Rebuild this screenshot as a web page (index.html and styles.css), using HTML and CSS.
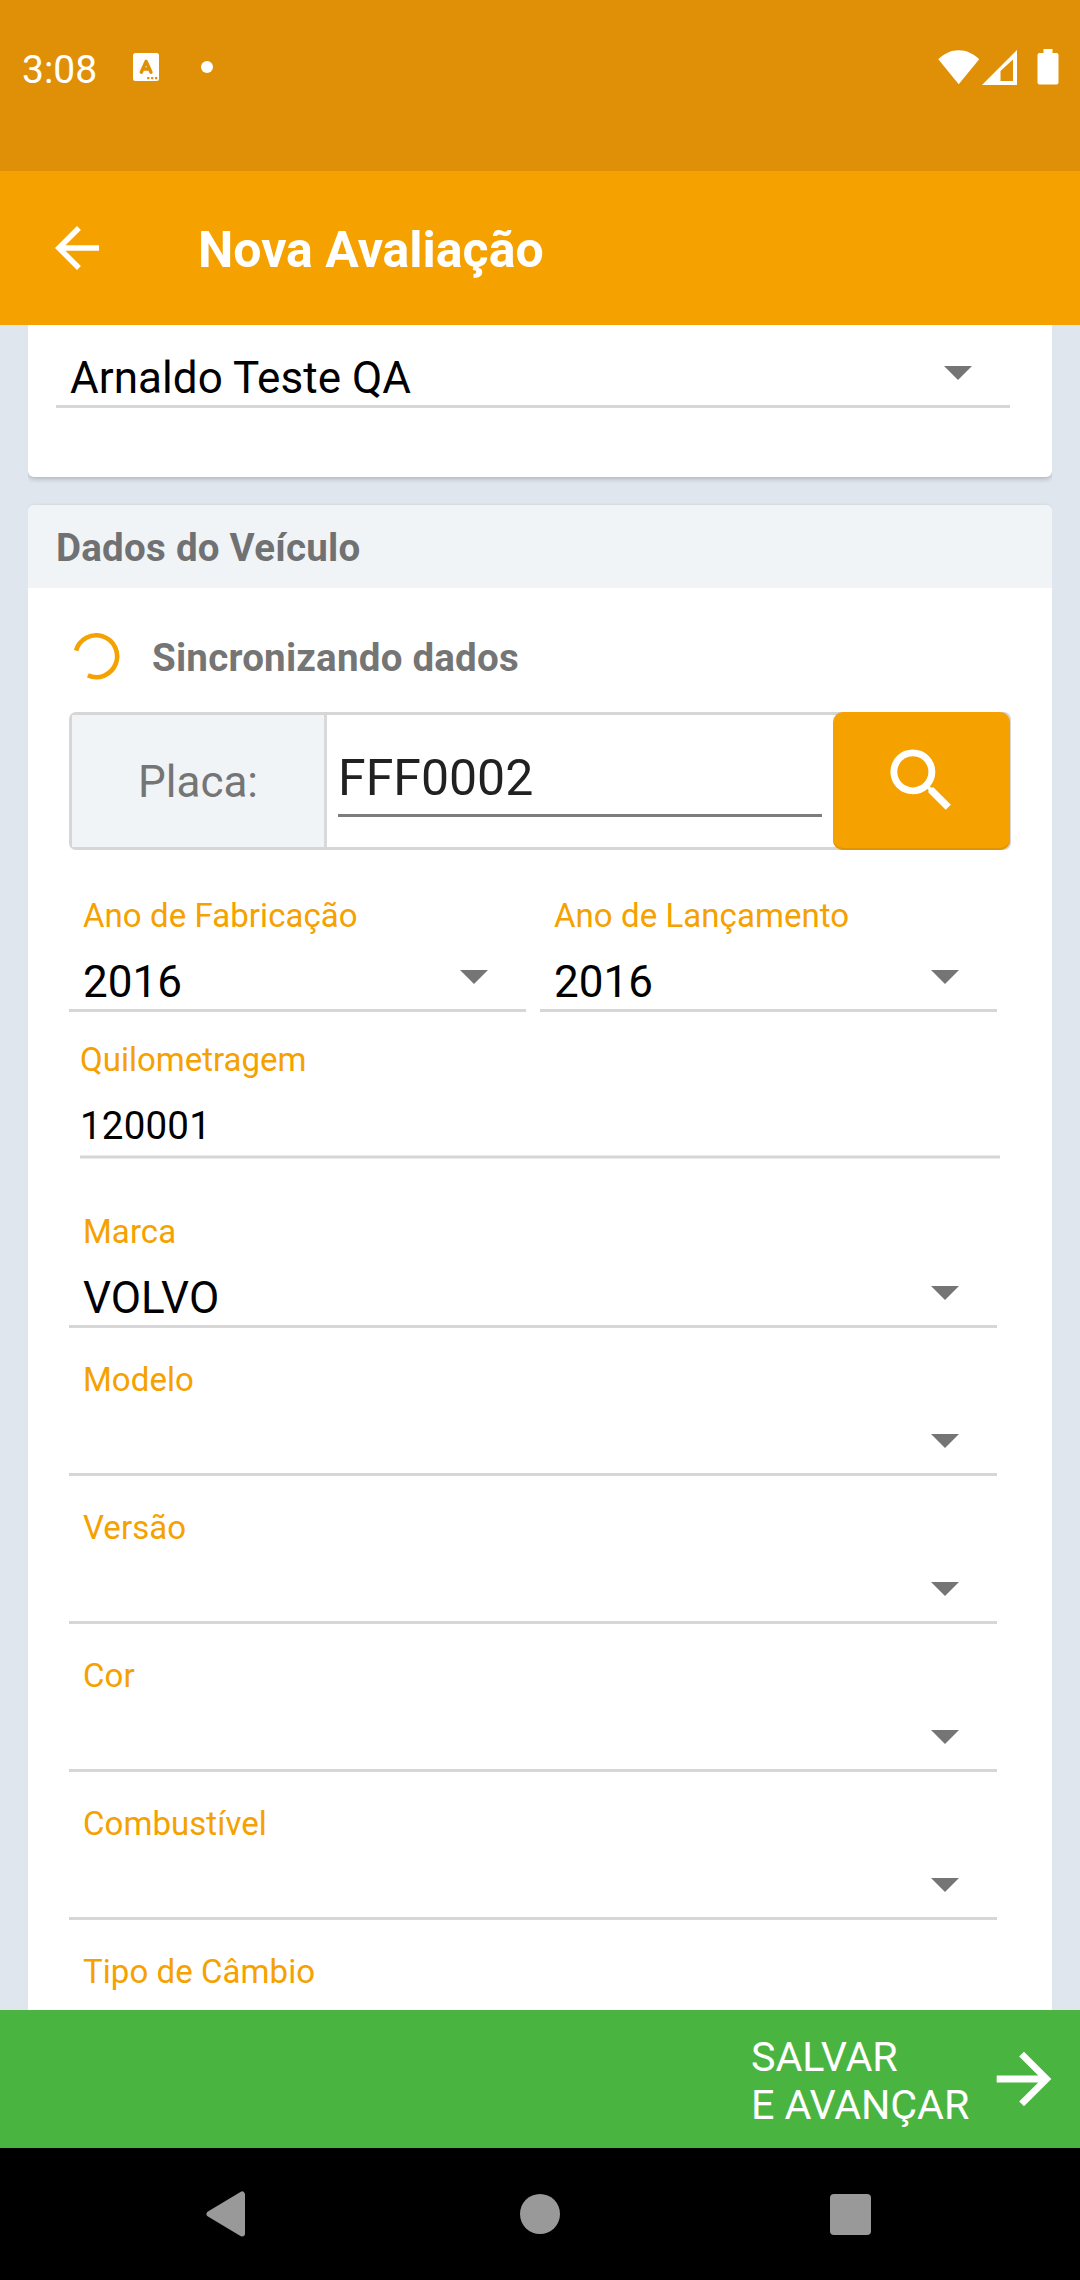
FILE: index.html
```html
<!DOCTYPE html>
<html lang="pt-BR">
<head>
<meta charset="utf-8">
<title>Nova Avaliação</title>
<link rel="stylesheet" href="styles.css">
</head>
<body>
<div class="screen">
  <div class="status-bar">
    <span class="clock">3:08</span>
    <svg class="status-notif" width="26" height="28" viewBox="0 0 26 28"><rect width="26" height="28" rx="2.5" fill="#fff"/><path d="M8.300 19.200 13.100 8.400l4.900 10.800M10 16h6.200" fill="none" stroke="#df9007" stroke-width="3.400" stroke-linecap="round" stroke-linejoin="round"/><path d="M14.2 24h2.2v2.2h-2.2zm3.9 0h2.2v2.2h-2.2zm3.9 0h2.2v2.2H22z" fill="#df9007"/></svg>
    <span class="status-dot"></span>
    <div class="status-icons">
      <svg width="42" height="36" viewBox="0 0 42 36"><path d="M0.3 10.2C6 4.700 13 1.300 20.700 1.300S35.500 4.700 41.200 10.200L20.700 35.300z" fill="#fff"/></svg>
      <svg class="signal" width="36" height="36" viewBox="0 0 36 36"><path fill-rule="evenodd" d="M0 36 35 1v35zM18.500 32H31V10.500L18.500 22z" fill="#fff"/></svg>
      <svg class="battery" width="22" height="36" viewBox="0 0 22 36"><path d="M6.500 0h9v4H19.500a2 2 0 0 1 2 2v27.500a2 2 0 0 1-2 2h-17a2 2 0 0 1-2-2V6a2 2 0 0 1 2-2h4z" fill="#fff"/></svg>
    </div>
  </div>

  <header class="app-bar">
    <svg class="back" width="66" height="66" viewBox="0 0 24 24"><path d="M20 11H7.830l5.590-5.590L12 4l-8 8 8 8 1.410-1.410L7.830 13H20v-2z" fill="#fff"/></svg>
    <h1 class="app-title">Nova Avaliação</h1>
  </header>

  <main class="content">
    <section class="card card-client">
      <div class="client-select">
        <span class="value">Arnaldo Teste QA</span><span class="caret"></span>
      </div>
    </section>

    <section class="card card-vehicle">
      <h2 class="card-header">Dados do Veículo</h2>
      <div class="card-body">
        <div class="sync">
          <svg width="48" height="48" viewBox="0 0 48 48"><path d="M4.100 18.700A20.900 20.900 0 1 1 15.900 43.400" fill="none" stroke="#f5a100" stroke-width="4.600"/></svg>
          <span>Sincronizando dados</span>
        </div>

        <div class="plate">
          <span class="plate-label">Placa:</span>
          <div class="plate-input"><span>FFF0002</span></div>
          <div class="plate-button">
            <svg width="83" height="83" viewBox="0 0 24 24"><path d="M15.500 14h-.790l-.280-.270A6.471 6.471 0 0 0 16 9.500 6.500 6.500 0 1 0 9.500 16c1.610 0 3.090-.590 4.230-1.570l.270.280v.790l5 4.990L20.490 19l-4.990-5zm-6 0C7.010 14 5 11.990 5 9.500S7.010 5 9.500 5 14 7.010 14 9.500 11.990 14 9.500 14z" fill="#fff"/></svg>
          </div>
        </div>

        <div class="years">
          <div class="field"><span class="label">Ano de Fabricação</span><div class="select"><span class="value">2016</span><span class="caret"></span></div></div>
          <div class="field"><span class="label">Ano de Lançamento</span><div class="select"><span class="value">2016</span><span class="caret"></span></div></div>
        </div>

        <div class="mileage">
          <span class="mileage-label">Quilometragem</span>
          <span class="mileage-value">120001</span>
          <div class="mileage-line"></div>
        </div>

        <div class="field-list">
          <div class="field"><span class="label">Marca</span><div class="select"><span class="value">VOLVO</span><span class="caret"></span></div></div>
          <div class="field"><span class="label">Modelo</span><div class="select"><span class="value"></span><span class="caret"></span></div></div>
          <div class="field"><span class="label">Versão</span><div class="select"><span class="value"></span><span class="caret"></span></div></div>
          <div class="field"><span class="label">Cor</span><div class="select"><span class="value"></span><span class="caret"></span></div></div>
          <div class="field"><span class="label">Combustível</span><div class="select"><span class="value"></span><span class="caret"></span></div></div>
          <div class="field"><span class="label">Tipo de Câmbio</span></div>
        </div>
      </div>
    </section>
  </main>

  <footer class="save-bar">
    <span class="save-text">SALVAR<br>E AVANÇAR</span>
    <svg width="82" height="82" viewBox="0 0 24 24"><path d="M12 4l-1.410 1.410L16.170 11H4v2h12.170l-5.580 5.590L12 20l8-8z" fill="#fff"/></svg>
  </footer>

  <nav class="nav-bar">
    <svg class="nav-back" width="40" height="46" viewBox="0 0 40 46"><path d="M36 3.500v39L3.500 23z" fill="#999" stroke="#999" stroke-width="6" stroke-linejoin="round"/></svg>
    <span class="nav-home"></span>
    <span class="nav-recent"></span>
  </nav>
</div>
</body>
</html>
```
FILE: styles.css
```css
* { box-sizing: border-box; }

body {
  margin: 0;
  font-family: Roboto, "Noto Sans", sans-serif;
  color: #000;
}

svg { display: block; flex: none; }

.screen {
  width: 1080px;
  height: 2280px;
  display: flex;
  flex-direction: column;
  overflow: hidden;
  background: #dfe6ed;
}

/* Status bar */
.status-bar {
  flex: none;
  height: 171px;
  padding: 49px 21px 0 22px;
  display: flex;
  align-items: flex-start;
  background: #df9007;
}

.clock {
  width: 111px;
  padding-top: 1px;
  font-size: 39px;
  line-height: 40px;
  color: #fff;
}

.status-notif { margin-top: 4px; }

.status-dot {
  width: 12px;
  height: 12px;
  margin: 12px 0 0 42px;
  border-radius: 50%;
  background: #fff;
}

.status-icons { display: flex; margin-left: auto; }
.signal { margin-left: 2px; }
.battery { margin-left: 19px; }

/* App bar */
.app-bar {
  flex: none;
  height: 154px;
  padding-left: 44px;
  display: flex;
  align-items: center;
  background: #f5a100;
}

.app-title {
  margin: 4px 0 0 88px;
  font-size: 50px;
  line-height: 60px;
  font-weight: 700;
  color: #fff;
}

/* Cards */
.content {
  flex: none;
  height: 1685px;
  padding: 0 28px;
  overflow: hidden;
}

/* The elevation shadow only shows above and below a card */
.card {
  background: #fff;
  box-shadow: 0 2px 5px rgba(0, 0, 0, 0.22);
  clip-path: inset(-12px 0);
}

.card-client {
  height: 152px;
  padding: 0 42px 0 28px;
  border-radius: 0 0 6px 6px;
}

.card-vehicle {
  height: 1600px;
  margin-top: 28px;
  border-radius: 6px;
}

.card-header {
  height: 83px;
  margin: 0;
  padding: 0 28px;
  border-radius: 6px 6px 0 0;
  background: #f0f4f7;
  font-size: 38.5px;
  line-height: 85px;
  font-weight: 700;
  letter-spacing: 0.25px;
  color: #707173;
}

.card-body { padding: 0 41px; }

/* Selects */
.client-select,
.select {
  display: flex;
  align-items: flex-end;
  justify-content: space-between;
  padding: 0 38px 0 14px;
  border-bottom: 3px solid #d6d6d6;
}

.client-select { height: 83px; }
.select { height: 76px; }

.value {
  margin-bottom: 1px;
  font-size: 44px;
  line-height: 52px;
  letter-spacing: 0.05px;
}

.caret {
  width: 28px;
  height: 14px;
  margin-bottom: 25px;
  background: #757575;
  clip-path: polygon(0 0, 100% 0, 50% 100%);
}

.field { height: 148px; padding-top: 32px; }

.label {
  display: block;
  padding-left: 14px;
  font-size: 33px;
  line-height: 40px;
  letter-spacing: 0.06px;
  color: #f5a100;
}

/* Sync indicator */
.sync {
  height: 124px;
  padding: 44px 0 0 3px;
  display: flex;
  align-items: flex-start;
  gap: 32px;
  font-size: 38.5px;
  line-height: 46px;
  font-weight: 700;
  letter-spacing: 0.22px;
  color: #757575;
}

.sync span { padding-top: 3px; }

/* Plate search */
.plate {
  width: 942px;
  height: 138px;
  display: grid;
  grid-template-columns: 255px 506px 177px;
  border: 3px solid #d6d6d6;
  border-radius: 7px;
}

.plate-label {
  height: 132px;
  padding-top: 2px;
  border-right: 3px solid #d9d9d9;
  background: #f0f4f7;
  font-size: 44px;
  line-height: 130px;
  text-align: center;
  color: #757575;
}

.plate-input { padding: 31px 11px 0; }

.plate-input span {
  display: block;
  height: 71px;
  border-bottom: 3px solid #7d7d7d;
  font-size: 50px;
  line-height: 64px;
  color: #212121;
}

.plate-button {
  height: 138px;
  margin-top: -3px;
  padding-bottom: 2px;
  display: flex;
  align-items: center;
  justify-content: center;
  border-radius: 10px;
  background: #f5a100;
  box-shadow: inset 0 -2px #e29407;
}

.years {
  width: 928px;
  margin-top: 14px;
  display: grid;
  grid-template-columns: 1fr 1fr;
  gap: 14px;
}

/* Mileage */
.mileage {
  width: 920px;
  height: 168px;
  margin-left: 11px;
  padding-top: 28px;
}

.mileage-label {
  display: block;
  font-size: 33px;
  line-height: 40px;
  color: #f5a100;
}

.mileage-value {
  display: block;
  margin-top: 23px;
  font-size: 38.5px;
  line-height: 46px;
  letter-spacing: 0.2px;
}

.mileage-line {
  height: 2px;
  margin-top: 7px;
  background: #d6d6d6;
  box-shadow: 0 1px #eaeaea, 0 -1px #eaeaea;
}

.field-list { width: 928px; }

/* Save bar */
.save-bar {
  flex: none;
  height: 138px;
  padding-right: 15px;
  display: flex;
  align-items: center;
  justify-content: flex-end;
  background: #49b43f;
}

.save-text {
  width: 232px;
  padding-top: 3px;
  font-size: 41.25px;
  line-height: 48px;
  letter-spacing: -0.1px;
  color: #fff;
  white-space: nowrap;
}

/* System navigation */
.nav-bar {
  flex: 1;
  display: flex;
  align-items: center;
  padding-left: 206px;
  background: #000;
}

.nav-home {
  width: 40px;
  height: 40px;
  margin-left: 274px;
  border-radius: 50%;
  background: #999;
}

.nav-recent {
  width: 41px;
  height: 41px;
  margin-left: 270px;
  border-radius: 4px;
  background: #999;
}
```
